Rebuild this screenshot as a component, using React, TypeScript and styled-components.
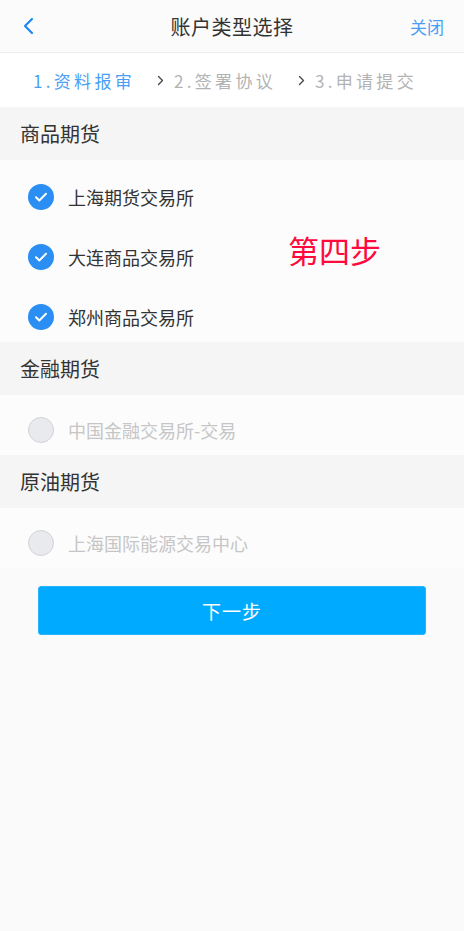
import React from "react";
import styled, { createGlobalStyle } from "styled-components";

const GlobalStyle = createGlobalStyle`
  html, body {
    margin: 0;
    padding: 0;
    background: #fafafa;
    font-family: "Noto Sans CJK SC", "Noto Sans", sans-serif;
  }
`;

const Page = styled.div`
  width: 464px;
  min-height: 931px;
  background: #fafafa;
`;

const Header = styled.div`
  display: grid;
  grid-template-columns: 80px 1fr 80px;
  align-items: center;
  height: 52px;
  background: #fbfbfb;
  border-bottom: 1px solid #ececec;
`;

const Back = styled.div`
  display: flex;
  align-items: center;
  padding-left: 22px;
  height: 100%;
`;

const Title = styled.div`
  text-align: center;
  font-size: 20px;
  color: #333;
  letter-spacing: 0.5px;
`;

const Close = styled.div`
  text-align: right;
  padding-right: 20px;
  font-size: 17px;
  color: #4a9ff5;
`;

const Steps = styled.div`
  display: flex;
  align-items: center;
  justify-content: center;
  height: 54px;
  background: #fff;
  padding-right: 14px;
`;

const Step = styled.span<{ $active?: boolean }>`
  font-size: 17px;
  letter-spacing: 3.3px;
  color: ${(p) => (p.$active ? "#4a9ff5" : "#b3b3b3")};
`;

const Chevron = styled.span`
  display: flex;
  margin: 0 10px 0 22px;
`;

const SectionHead = styled.div`
  display: flex;
  align-items: center;
  height: 53px;
  padding-left: 20px;
  background: #f5f5f5;
  font-size: 20px;
  color: #333;
`;

const Group = styled.div<{ $pad?: number }>`
  position: relative;
  background: #fcfcfc;
  padding-top: ${(p) => p.$pad ?? 0}px;
`;

const Row = styled.div`
  display: flex;
  align-items: center;
  height: 60px;
  box-sizing: border-box;
  padding: 10px 0 0 28px;
`;

const Circle = styled.span<{ $checked?: boolean }>`
  display: flex;
  align-items: center;
  justify-content: center;
  width: 26px;
  height: 26px;
  box-sizing: border-box;
  border-radius: 50%;
  background: ${(p) => (p.$checked ? "#2a8ef2" : "#e9eaee")};
  border: ${(p) => (p.$checked ? "none" : "1px solid #d2d3d8")};
`;

const Label = styled.span<{ $disabled?: boolean }>`
  margin-left: 14px;
  font-size: 18px;
  color: ${(p) => (p.$disabled ? "#c6c6c6" : "#333")};
`;

const Stamp = styled.div`
  position: absolute;
  left: 288px;
  top: 72px;
  font-size: 31px;
  line-height: 36px;
  color: #ff0a3c;
`;

const Button = styled.button`
  display: block;
  width: 388px;
  height: 49px;
  margin: 18px 0 0 38px;
  border: 1px solid #24b4ff;
  border-radius: 3px;
  background: #00aaff;
  color: #fff;
  font-family: inherit;
  font-size: 19px;
  letter-spacing: 1px;
`;

const Check = () => (
  <svg width="16" height="16" viewBox="0 0 16 16">
    <path d="M3 8.3l3.3 3.2L13 4.8" fill="none" stroke="#fff" strokeWidth="2" strokeLinecap="round" strokeLinejoin="round" />
  </svg>
);

const Item = ({ label, checked }: { label: string; checked?: boolean }) => (
  <Row>
    <Circle $checked={checked}>{checked && <Check />}</Circle>
    <Label $disabled={!checked}>{label}</Label>
  </Row>
);

const Arrow = () => (
  <svg width="7" height="11" viewBox="0 0 7 11">
    <path d="M1.5 1.5l4 4-4 4" fill="none" stroke="#4a4a4a" strokeWidth="1.4" strokeLinecap="round" strokeLinejoin="round" />
  </svg>
);

export default function App() {
  return (
    <Page>
      <GlobalStyle />
      <Header>
        <Back>
          <svg width="14" height="18" viewBox="0 0 14 18">
            <path d="M10 2L3 9l7 7" fill="none" stroke="#1e88f0" strokeWidth="2.2" strokeLinecap="round" strokeLinejoin="round" />
          </svg>
        </Back>
        <Title>账户类型选择</Title>
        <Close>关闭</Close>
      </Header>
      <Steps>
        <Step $active>1.资料报审</Step>
        <Chevron>
          <Arrow />
        </Chevron>
        <Step>2.签署协议</Step>
        <Chevron>
          <Arrow />
        </Chevron>
        <Step>3.申请提交</Step>
      </Steps>

      <SectionHead>商品期货</SectionHead>
      <Group $pad={2}>
        <Item label="上海期货交易所" checked />
        <Item label="大连商品交易所" checked />
        <Item label="郑州商品交易所" checked />
        <Stamp>第四步</Stamp>
      </Group>

      <SectionHead>金融期货</SectionHead>
      <Group>
        <Item label="中国金融交易所-交易" />
      </Group>

      <SectionHead>原油期货</SectionHead>
      <Group>
        <Item label="上海国际能源交易中心" />
      </Group>

      <Button>下一步</Button>
    </Page>
  );
}
